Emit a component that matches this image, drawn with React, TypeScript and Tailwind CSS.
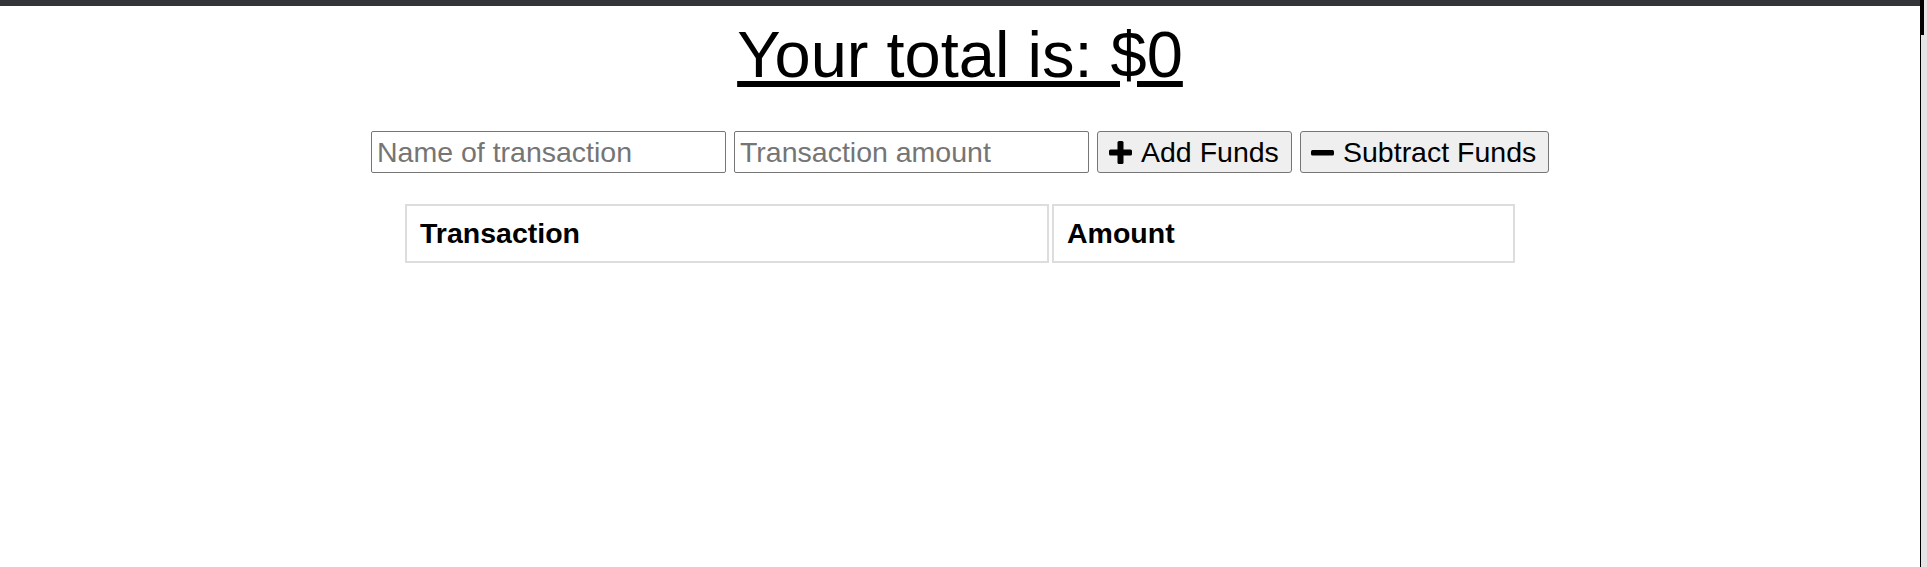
export default function App() {
  return (
    <div className="flex h-[567px] bg-white font-['Liberation_Sans',Arial,sans-serif] text-black">
      <div className="flex-1">
        <div className="h-[6px] bg-[#333438]" />
        <h1 className="mt-[12px] text-center text-[65px] leading-[74px] font-normal underline">
          Your total is: $0
        </h1>

        <form className="mt-[39px] flex justify-center gap-[8px]">
          <input
            type="text"
            placeholder="Name of transaction"
            className="h-[42px] w-[355px] rounded-[2px] border border-[#767676] px-[5px] text-[28.5px] placeholder:text-[#757575]"
          />
          <input
            type="number"
            placeholder="Transaction amount"
            className="h-[42px] w-[355px] rounded-[2px] border border-[#767676] px-[5px] text-[28.5px] placeholder:text-[#757575]"
          />
          <button
            type="button"
            className="flex h-[42px] w-[195px] items-center gap-[9px] rounded-[3px] border border-[#767676] bg-[#efefef] pl-[11px] text-[28.5px]"
          >
            <svg width="23" height="23" viewBox="0 0 23 23" className="shrink-0">
              <rect x="8.5" y="0" width="6" height="23" rx="1.5" fill="#000" />
              <rect x="0" y="8.5" width="23" height="6" rx="1.5" fill="#000" />
            </svg>
            <span>Add Funds</span>
          </button>
          <button
            type="button"
            className="flex h-[42px] w-[249px] items-center gap-[9px] rounded-[3px] border border-[#767676] bg-[#efefef] pl-[10px] text-[28.5px]"
          >
            <svg width="23" height="23" viewBox="0 0 23 23" className="shrink-0">
              <rect x="0" y="9" width="23" height="5.5" rx="1.5" fill="#000" />
            </svg>
            <span>Subtract Funds</span>
          </button>
        </form>

        <table className="mx-auto mt-[31px] border-separate border-spacing-x-[3px] border-spacing-y-0">
          <thead>
            <tr>
              <th className="h-[59px] w-[644px] border-2 border-[#dddddd] px-[13px] text-left align-middle text-[28.5px] font-bold">
                Transaction
              </th>
              <th className="h-[59px] w-[463px] border-2 border-[#dddddd] px-[13px] text-left align-middle text-[28.5px] font-bold">
                Amount
              </th>
            </tr>
          </thead>
          <tbody></tbody>
        </table>
      </div>

      <div className="flex w-[7px] border-l border-black bg-[#e4e4e7]">
        <div className="h-[35px] w-[3px] bg-black" />
      </div>
    </div>
  );
}
